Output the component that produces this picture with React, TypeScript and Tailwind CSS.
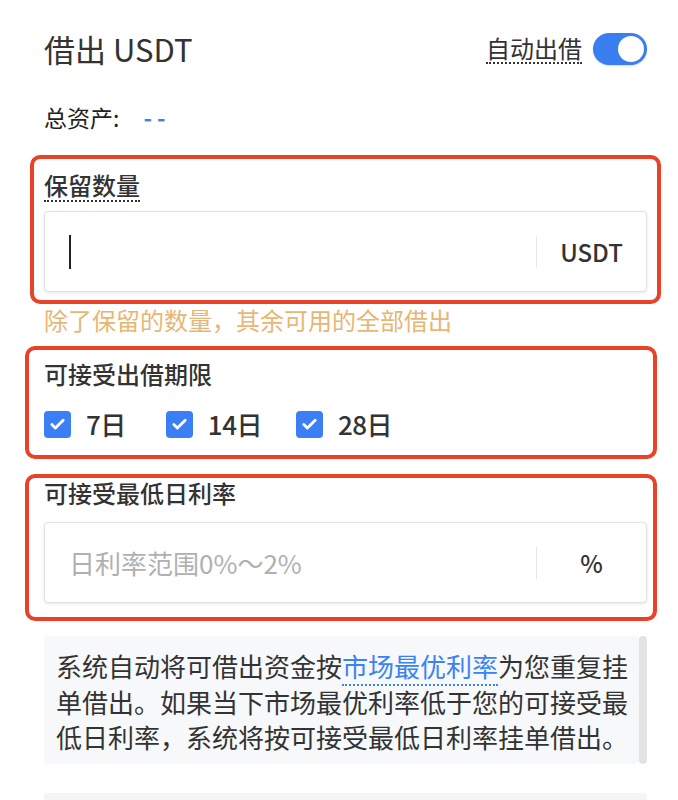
import { Check } from "lucide-react";

const font = "font-['Noto_Sans_CJK_SC','Noto_Sans',sans-serif]";

function Toggle() {
  return (
    <div className="flex h-8 w-[54px] items-center justify-end rounded-full bg-[#3a7ff2] px-[3px] shadow-[0_1px_2px_rgba(0,0,0,0.15)]">
      <div className="h-[26px] w-[26px] rounded-full bg-white" />
    </div>
  );
}

function Field({ children, unit }: { children: React.ReactNode; unit: string }) {
  return (
    <div className="flex h-[81px] items-center rounded-[4px] border border-[#e2e2e2] bg-white shadow-[0_1px_3px_rgba(0,0,0,0.1)]">
      <div className="flex flex-1 items-center pl-6">{children}</div>
      <div className="h-8 w-px bg-[#e6e6e6]" />
      <div className="w-[109px] text-center text-[24px] font-medium text-[#333]">{unit}</div>
    </div>
  );
}

function Term({ label, className }: { label: string; className?: string }) {
  return (
    <label className={`flex items-center gap-[15px] ${className ?? ""}`}>
      <span className="flex h-[27px] w-[27px] items-center justify-center rounded-[4px] bg-[#3a80f4]">
        <Check className="h-[17px] w-[17px] text-white" strokeWidth={4} />
      </span>
      <span className="text-[26px] font-medium leading-8 tracking-[-0.5px] text-[#333]">{label}</span>
    </label>
  );
}

export default function App() {
  return (
    <div className={`${font} h-[800px] overflow-hidden bg-white pl-[44px] pr-[31px] text-[#333]`}>
      {/* Header */}
      <div className="mt-[29px] flex h-10 items-center justify-between">
        <h1 className="text-[31px] font-normal leading-10 text-[#333]">借出 USDT</h1>
        <div className="flex items-center gap-[11px]">
          <span className="border-b-2 border-dotted border-[#333] text-[24px] leading-[28px] text-[#333]">
            自动出借
          </span>
          <Toggle />
        </div>
      </div>

      <div className="mt-[33px] flex items-center text-[23px] leading-[30px] text-[#222]">
        总资产:
        <span className="ml-[24px] font-bold tracking-[5px] text-[#3b82f6]">--</span>
      </div>

      {/* Reserve amount */}
      <div className="-mx-[14px] mt-[23px] rounded-[10px] border-4 border-[#ea4129] px-[10px] pt-3 pb-2">
        <span className="inline-block border-b-2 border-dotted border-[#333] pb-[1px] text-[24px] font-medium leading-[28px] text-[#333]">
          保留数量
        </span>
        <div className="mt-[9px]">
          <Field unit="USDT">
            <span className="h-[34px] w-[2px] bg-[#222]" />
          </Field>
        </div>
      </div>
      <p className="mt-[2px] text-[24px] leading-[28px] text-[#e8b673]">
        除了保留的数量，其余可用的全部借出
      </p>

      {/* Terms */}
      <div className="mt-3 -ml-[19px] -mr-[10px] rounded-[10px] border-4 border-[#ea4129] pl-[15px] pr-[6px] pt-[10px] pb-[15px]">
        <div className="text-[24px] font-medium leading-[28px] text-[#333]">可接受出借期限</div>
        <div className="mt-5 flex items-center">
          <Term label="7日" />
          <Term label="14日" className="ml-[40px]" />
          <Term label="28日" className="ml-[34px]" />
        </div>
      </div>

      {/* Min rate */}
      <div className="mt-[15px] -ml-[19px] -mr-[10px] rounded-[10px] border-4 border-[#ea4129] pl-[15px] pr-[6px] pt-[1px] pb-[14px]">
        <div className="text-[24px] font-medium leading-[28px] text-[#333]">可接受最低日利率</div>
        <div className="mt-[15px]">
          <Field unit="%">
            <span className="text-[26px] text-[#b0b0b0]">日利率范围0%～2%</span>
          </Field>
        </div>
      </div>

      {/* Info */}
      <div className="mt-[15px] flex">
        <div className="flex-1 rounded-[4px] bg-[#f7f8fa] pl-3 pr-1 pt-[12px] pb-[9px] text-[26px] leading-[35.5px] text-[#333]">
          系统自动将可借出资金按
          <span className="border-b-2 border-dotted border-[#3b82f6] text-[#3b82f6]">市场最优利率</span>
          为您重复挂单借出。如果当下市场最优利率低于您的可接受最低日利率，系统将按可接受最低日利率挂单借出。
        </div>
        <div className="w-2 rounded-full bg-[#e3e3e3]" />
      </div>

      <div className="mt-[29px] h-10 rounded-[4px] bg-[#f4f5f8]" />
    </div>
  );
}
